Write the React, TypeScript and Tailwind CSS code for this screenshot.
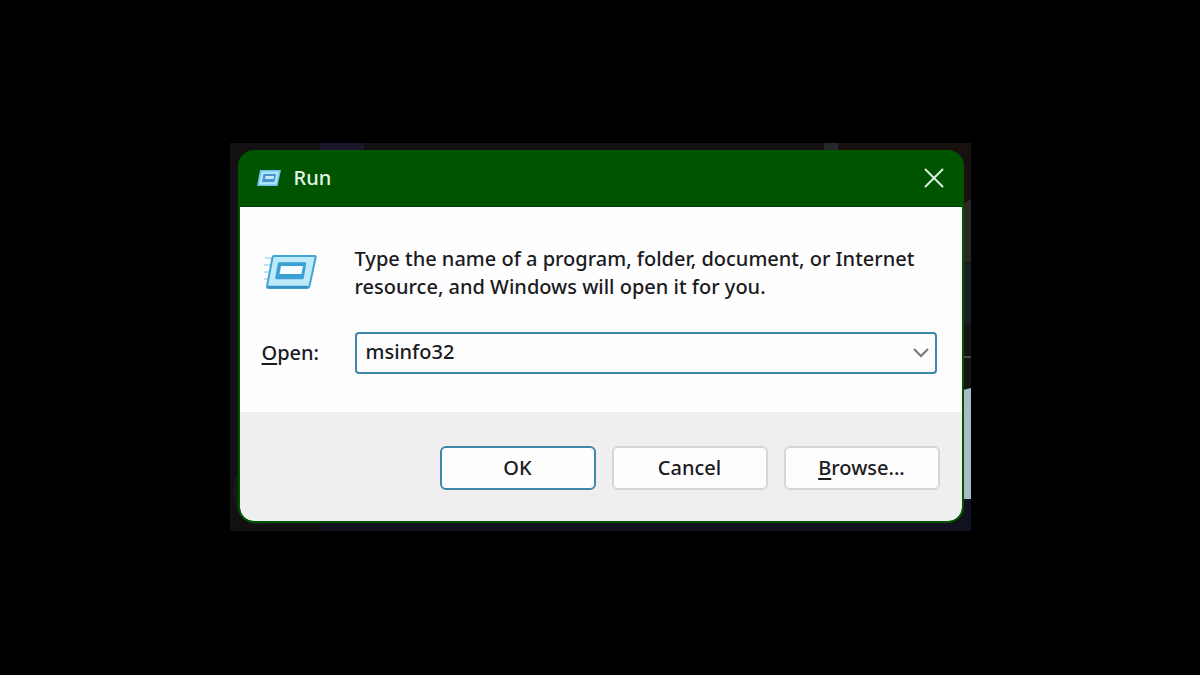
import React, { useState } from 'react';

function Wallpaper() {
  return (
    <svg
      className="absolute inset-0 w-full h-full"
      viewBox="0 0 741 388"
      preserveAspectRatio="none"
      aria-hidden="true"
    >
      <rect width="741" height="388" fill="#121013" />
      <rect x="90" width="44" height="12" fill="#18182a" />
      <rect x="594" width="14" height="12" fill="#23292b" />
      <rect x="608" width="133" height="70" fill="#181110" />
      <path d="M733 62q3 -4 8 -6v63h-8z" fill="#2a2622" />
      <rect x="733" y="120" width="8" height="60" fill="#1b2020" />
      <rect x="733" y="180" width="8" height="66" fill="#141414" />
      <rect x="733" y="213" width="8" height="2" fill="#4a4a4a" />
      <path d="M733 247l8 -2v111h-8z" fill="#a9bac9" />
      <rect x="733" y="356" width="8" height="32" fill="#10121f" />
      <rect x="90" y="380" width="651" height="8" fill="#10121f" />
      <ellipse cx="30" cy="348" rx="27" ry="34" fill="#171b17" />
    </svg>
  );
}

function SmallRunIcon() {
  return (
    <svg width="26" height="20" viewBox="0 0 26 20" aria-hidden="true">
      <path d="M4 2H25L21.500 18H1Z" fill="#6cc4ec" />
      <path d="M5.500 3.500H23L20.300 16.500H2.800Z" fill="#a9e4fa" />
      <path d="M7.500 6H20L18.500 14H6Z" fill="#4b93cf" />
      <path d="M9.500 8H18L17.500 11H9Z" fill="#c4eafb" />
    </svg>
  );
}

function RunIcon() {
  return (
    <svg width="56" height="38" viewBox="0 0 56 38" aria-hidden="true">
      <path d="M3 5H10M2 12H9M2 19H8M2 26H6" stroke="#b9e4f3" strokeWidth="2" />
      <path
        d="M12 3H52.500Q54 3 53.600 4.500L47.500 33Q47 35 45 35H6.500Q4.600 35 5 33L10.500 4.500Q10.800 3 12 3Z"
        fill="#bfeafa"
        stroke="#42a5d2"
        strokeWidth="2"
      />
      <path d="M6 34H46" stroke="#3590c4" strokeWidth="2.500" />
      <path d="M17 10.500H43L40.500 25H14.500Z" fill="#3ba0d2" stroke="#3ba0d2" strokeWidth="2.500" strokeLinejoin="round" />
      <path d="M19 13H41L39.500 21H17.500Z" fill="#f4fcff" />
    </svg>
  );
}

const buttonBase =
  'flex-1 max-w-[156px] h-11 rounded-md bg-[#fdfdfd] text-center hover:bg-[#eaf4fb]';

export default function App() {
  const [command, setCommand] = useState('msinfo32');

  return (
    <main className="min-h-screen pb-0.5 bg-black flex items-center justify-center font-['Noto_Sans',sans-serif] text-xl font-medium text-[#1b1b1f]">
      <div className="relative w-full max-w-[741px] pt-[7px] pb-2 pl-2 pr-[7px]">
        <Wallpaper />
        <form
          className="relative rounded-2xl overflow-hidden border-2 border-[#005400] bg-[#005400]"
          onSubmit={(e) => e.preventDefault()}
        >
          <header className="flex items-center h-[55px] pb-0.5 px-4 text-[#e6f5e6] border-b border-[#003c00]">
            <SmallRunIcon />
            <h1 className="ml-3 flex-1">Run</h1>
            <button type="button" aria-label="Close" className="w-6 h-6 flex items-center justify-center">
              <svg width="20" height="20" viewBox="0 0 20 20" stroke="#d9efd9" strokeWidth="2" strokeLinecap="round">
                <path d="M1.500 1.500L18.500 18.500M18.500 1.500L1.500 18.500" />
              </svg>
            </button>
          </header>

          <div className="grid grid-cols-[93px_1fr] gap-y-[31px] bg-[#fefefe] pt-[38px] pb-[38px] pl-[22px] pr-[25px]">
            <div className="pt-2">
              <RunIcon />
            </div>
            <p className="leading-7">
              Type the name of a program, folder, document, or Internet resource, and Windows will
              open it for you.
            </p>

            <label htmlFor="open" className="self-center">
              <span className="underline underline-offset-3 decoration-2">O</span>pen:
            </label>
            <div className="flex items-center h-[42px] rounded-sm border-2 border-[#3f86ab] bg-[#fdfdfd]">
              <input
                id="open"
                type="text"
                value={command}
                onChange={(e) => setCommand(e.target.value)}
                className="flex-1 min-w-0 h-full pl-[9px] pb-0.5 bg-transparent outline-none"
              />
              <button type="button" aria-label="Show history" className="w-7 h-full flex items-center justify-center">
                <svg width="16" height="10" viewBox="0 0 16 10" fill="none" stroke="#777777" strokeWidth="2" strokeLinecap="round">
                  <path d="M1.500 1.500L8 8L14.500 1.500" />
                </svg>
              </button>
            </div>
          </div>

          <footer className="flex justify-end gap-4 pt-[34px] pb-[31px] px-[22px] rounded-b-[14px] bg-[#efefef]">
            <button type="submit" className={`${buttonBase} border-2 border-[#3f86ab]`}>
              OK
            </button>
            <button type="button" className={`${buttonBase} border-2 border-[#d6d6d6]`}>
              Cancel
            </button>
            <button type="button" className={`${buttonBase} border-2 border-[#d6d6d6]`}>
              <span className="underline underline-offset-3 decoration-2">B</span>rowse...
            </button>
          </footer>
        </form>
      </div>
    </main>
  );
}
